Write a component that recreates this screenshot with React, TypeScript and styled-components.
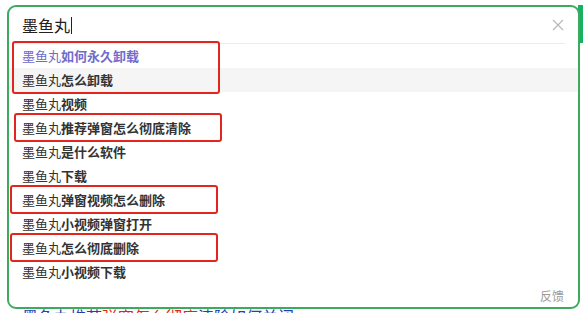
import React from 'react';
import styled, { createGlobalStyle } from 'styled-components';

const GlobalStyle = createGlobalStyle`
  html, body {
    margin: 0;
    padding: 0;
    background: #fff;
    overflow: hidden;
    font-family: "Microsoft YaHei", "Noto Sans CJK SC", sans-serif;
  }
`;

const Page = styled.div`
  padding: 5px 0 0 7px;
  width: 583px;
  height: 313px;
  box-sizing: border-box;
  overflow: hidden;
`;

const SearchRow = styled.div`
  display: flex;
  align-items: flex-start;
`;

const Dropdown = styled.div`
  position: relative;
  z-index: 1;
  flex: none;
  width: 573px;
  height: 304px;
  box-sizing: border-box;
  border: 2px solid #3aab5f;
  border-radius: 9px;
  background: #fff;
  display: flex;
  flex-direction: column;
`;

const SearchButton = styled.div`
  flex: none;
  width: 20px;
  height: 38px;
  margin-left: -2px;
  background: #19b062;
`;

const InputBar = styled.div`
  display: flex;
  align-items: center;
  height: 36px;
  padding: 0 14px 0 13px;
`;

const InputText = styled.div`
  flex: 1;
  font-size: 16px;
  color: #222;
  display: flex;
  align-items: center;
`;

const Caret = styled.span`
  display: inline-block;
  width: 1px;
  height: 17px;
  margin-left: 1px;
  background: #222;
`;

const ClearIcon = styled.svg`
  width: 12px;
  height: 12px;
`;

const Divider = styled.div`
  height: 1px;
  margin: 0 13px 0 5px;
  background: #ececec;
`;

const List = styled.div`
  display: flex;
  flex-direction: column;
`;

const Item = styled.div<{ $hover?: boolean; $visited?: boolean }>`
  height: 24px;
  line-height: 24px;
  padding-left: 13px;
  font-size: 13px;
  color: ${({ $visited }) => ($visited ? '#6f6ccb' : '#333')};
  background: ${({ $hover }) => ($hover ? '#f5f5f5' : 'transparent')};
  white-space: nowrap;

  b {
    font-weight: 700;
  }
`;

const Marked = styled.div<{ $shift?: number }>`
  position: relative;

  &::after {
    content: '';
    position: absolute;
    left: ${({ $shift }) => $shift ?? 3}px;
    width: 204px;
    top: -3px;
    bottom: -2px;
    border: 2px solid #e3261d;
    border-radius: 3px;
    pointer-events: none;
  }
`;

const Footer = styled.div`
  margin-top: auto;
  height: 23px;
  display: flex;
  justify-content: flex-end;
  align-items: center;
  padding-right: 14px;
  font-size: 12px;
  color: #9a9a9a;
`;

const Behind = styled.div`
  margin-top: -3px;
  padding-left: 15px;
  font-size: 16px;
  line-height: 20px;
  color: #2440b3;
  white-space: nowrap;

  em {
    font-style: normal;
    color: #e1251b;
  }
`;

const prefix = '墨鱼丸';

const Row: React.FC<{ rest: string; hover?: boolean; visited?: boolean }> = ({ rest, hover, visited }) => (
  <Item $hover={hover} $visited={visited}>
    {prefix}
    <b>{rest}</b>
  </Item>
);

export default function App() {
  return (
    <>
      <GlobalStyle />
      <Page>
        <SearchRow>
          <Dropdown>
            <InputBar>
              <InputText>
                墨鱼丸<Caret />
              </InputText>
              <ClearIcon viewBox="0 0 12 12">
                <path d="M1 1 L11 11 M11 1 L1 11" stroke="#b8b8b8" strokeWidth="1.2" fill="none" />
              </ClearIcon>
            </InputBar>
            <Divider />
            <List>
              <Marked>
                <Row rest="如何永久卸载" visited />
                <Row rest="怎么卸载" hover />
              </Marked>
              <Row rest="视频" />
              <Marked $shift={5}>
                <Row rest="推荐弹窗怎么彻底清除" />
              </Marked>
              <Row rest="是什么软件" />
              <Row rest="下载" />
              <Marked $shift={1}>
                <Row rest="弹窗视频怎么删除" />
              </Marked>
              <Row rest="小视频弹窗打开" />
              <Marked $shift={1}>
                <Row rest="怎么彻底删除" />
              </Marked>
              <Row rest="小视频下载" />
            </List>
            <Footer>反馈</Footer>
          </Dropdown>
          <SearchButton />
        </SearchRow>
        <Behind>
          墨鱼丸推荐<em>弹窗怎么彻底</em>清除如何关闭
        </Behind>
      </Page>
    </>
  );
}
